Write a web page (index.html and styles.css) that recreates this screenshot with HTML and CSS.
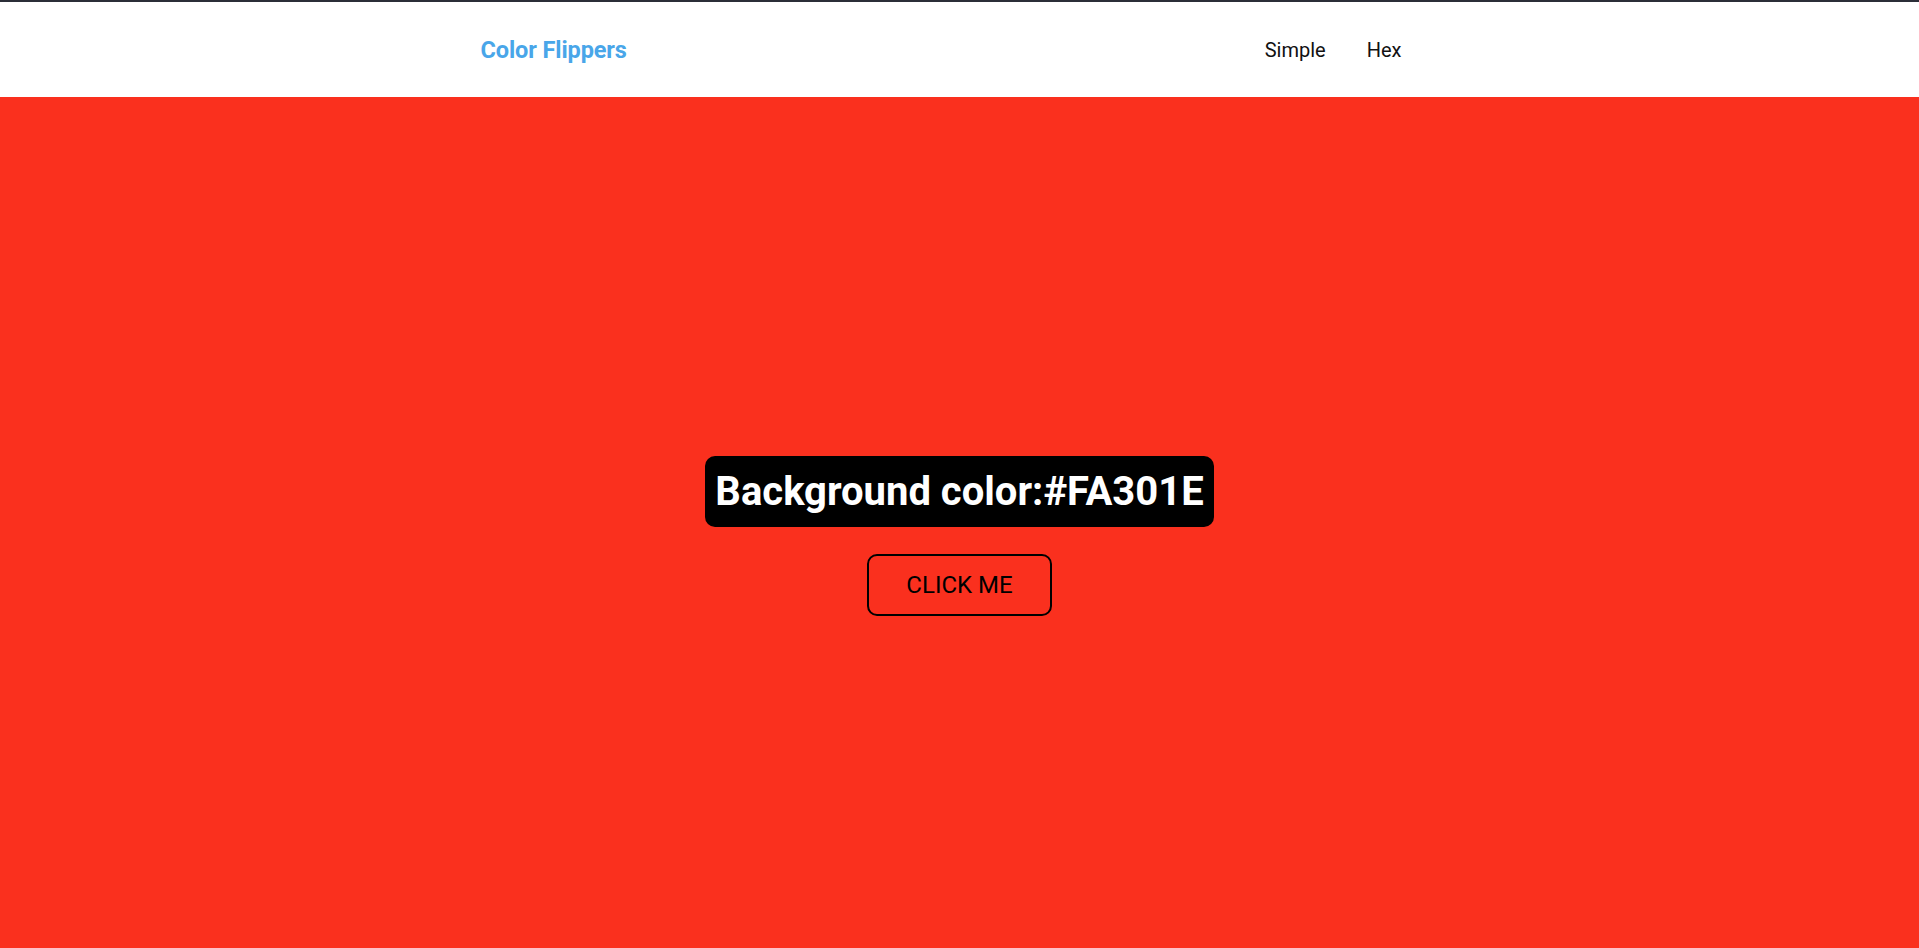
FILE: index.html
```html
<!DOCTYPE html>
<html lang="en">
<head>
<meta charset="UTF-8">
<title>Color Flipper</title>
<link rel="stylesheet" href="styles.css">
</head>
<body>
<nav class="nav">
  <div class="nav-center">
    <h4 class="logo">Color Flippers</h4>
    <ul class="nav-links">
      <li><a href="#">Simple</a></li>
      <li><a href="#">Hex</a></li>
    </ul>
  </div>
</nav>
<main class="main">
  <div class="container">
    <h2 class="title">Background color:<span class="color">#FA301E</span></h2>
    <button class="btn-hero">click me</button>
  </div>
</main>
</body>
</html>
```

FILE: styles.css
```css
* { box-sizing: border-box; margin: 0; padding: 0; }
html, body { height: 100%; }
body {
  font-family: Roboto, "Liberation Sans", sans-serif;
  background: #FA301E;
  border-top: 2px solid #2b2e38;
  overflow: hidden;
}
.nav {
  background: #fff;
  height: 95px;
}
.nav-center {
  width: 960px;
  height: 100%;
  margin: 0 auto;
  display: flex;
  align-items: center;
  justify-content: space-between;
  padding-right: 38px;
}
.logo {
  font-size: 23.5px;
  font-weight: 700;
  color: #49a6e9;
  padding-left: 1px;
  letter-spacing: -0.1px;
}
.nav-links {
  list-style: none;
  display: flex;
  gap: 41px;
}
.nav-links a {
  font-size: 20px;
  color: #111;
  text-decoration: none;
}
.main {
  min-height: calc(100vh - 97px);
  display: flex;
  align-items: center;
  justify-content: center;
  padding-top: 26px;
}
.container {
  display: flex;
  flex-direction: column;
  align-items: center;
  gap: 27px;
}
.title {
  background: #000;
  color: #fff;
  font-size: 40px;
  font-weight: 700;
  line-height: 47px;
  padding: 12px 10px;
  border-radius: 10px;
}
.color { color: #fff; }
.btn-hero {
  font-family: Roboto, "Liberation Sans", sans-serif;
  font-size: 24px;
  font-weight: 400;
  text-transform: uppercase;
  background: transparent;
  color: #000;
  border: 2px solid #000;
  border-radius: 10px;
  padding: 0 37px;
  height: 62px;
  line-height: 58px;
  cursor: pointer;
}
```
